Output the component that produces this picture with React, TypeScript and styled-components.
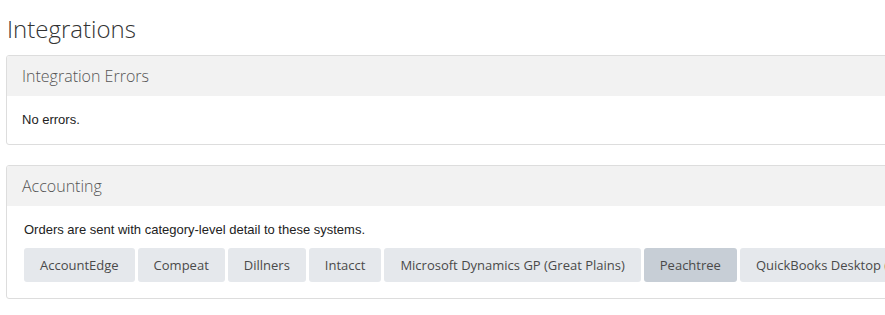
import React from 'react';
import styled, { createGlobalStyle } from 'styled-components';

const GlobalStyle = createGlobalStyle`
  html, body {
    margin: 0;
    padding: 0;
    background: #fff;
    overflow: hidden;
  }
  body {
    font-family: 'Liberation Sans', Arial, sans-serif;
    font-size: 13px;
    color: #222;
  }
`;

const Page = styled.div`
  padding: 0 0 0 6px;
  width: 910px;
`;

const Title = styled.h1`
  margin: 13px 0 10px 1px;
  font-family: 'Open Sans', sans-serif;
  font-weight: 300;
  font-size: 24px;
  line-height: 32px;
  color: #333;
`;

const Panel = styled.section`
  border: 1px solid #ddd;
  border-radius: 3px;
  margin-bottom: 20px;
  overflow: hidden;
`;

const PanelHeader = styled.div`
  background: #f2f2f2;
  padding: 9px 15px;
  font-family: 'Open Sans', sans-serif;
  font-weight: 300;
  font-size: 16px;
  line-height: 22px;
  color: #555;
`;

const PanelBody = styled.div<{ $tight?: boolean }>`
  padding: ${(p) => (p.$tight ? '15px 17px 16px 17px' : '15px')};
  line-height: 18px;
`;

const Description = styled.p`
  margin: 0 0 9px 0;
`;

const SystemList = styled.div`
  display: flex;
  gap: 3px;
  flex-wrap: nowrap;
`;

const SystemButton = styled.button<{ $active?: boolean }>`
  flex: none;
  height: 34px;
  padding: 0 16px;
  border: 0;
  border-radius: 3px;
  background: ${(p) => (p.$active ? '#c7ced6' : '#e5e8ec')};
  color: #4a4a4a;
  font-family: 'Open Sans', sans-serif;
  font-size: 13px;
  cursor: pointer;
  white-space: nowrap;
`;

const systems = [
  'AccountEdge',
  'Compeat',
  'Dillners',
  'Intacct',
  'Microsoft Dynamics GP (Great Plains)',
  'Peachtree',
  'QuickBooks Desktop (Online)',
];

export default function App() {
  return (
    <Page>
      <GlobalStyle />
      <Title>Integrations</Title>
      <Panel>
        <PanelHeader>Integration Errors</PanelHeader>
        <PanelBody>No errors.</PanelBody>
      </Panel>
      <Panel>
        <PanelHeader>Accounting</PanelHeader>
        <PanelBody $tight>
          <Description>Orders are sent with category-level detail to these systems.</Description>
          <SystemList>
            {systems.map((s) => (
              <SystemButton key={s} $active={s === 'Peachtree'}>
                {s}
              </SystemButton>
            ))}
          </SystemList>
        </PanelBody>
      </Panel>
    </Page>
  );
}
